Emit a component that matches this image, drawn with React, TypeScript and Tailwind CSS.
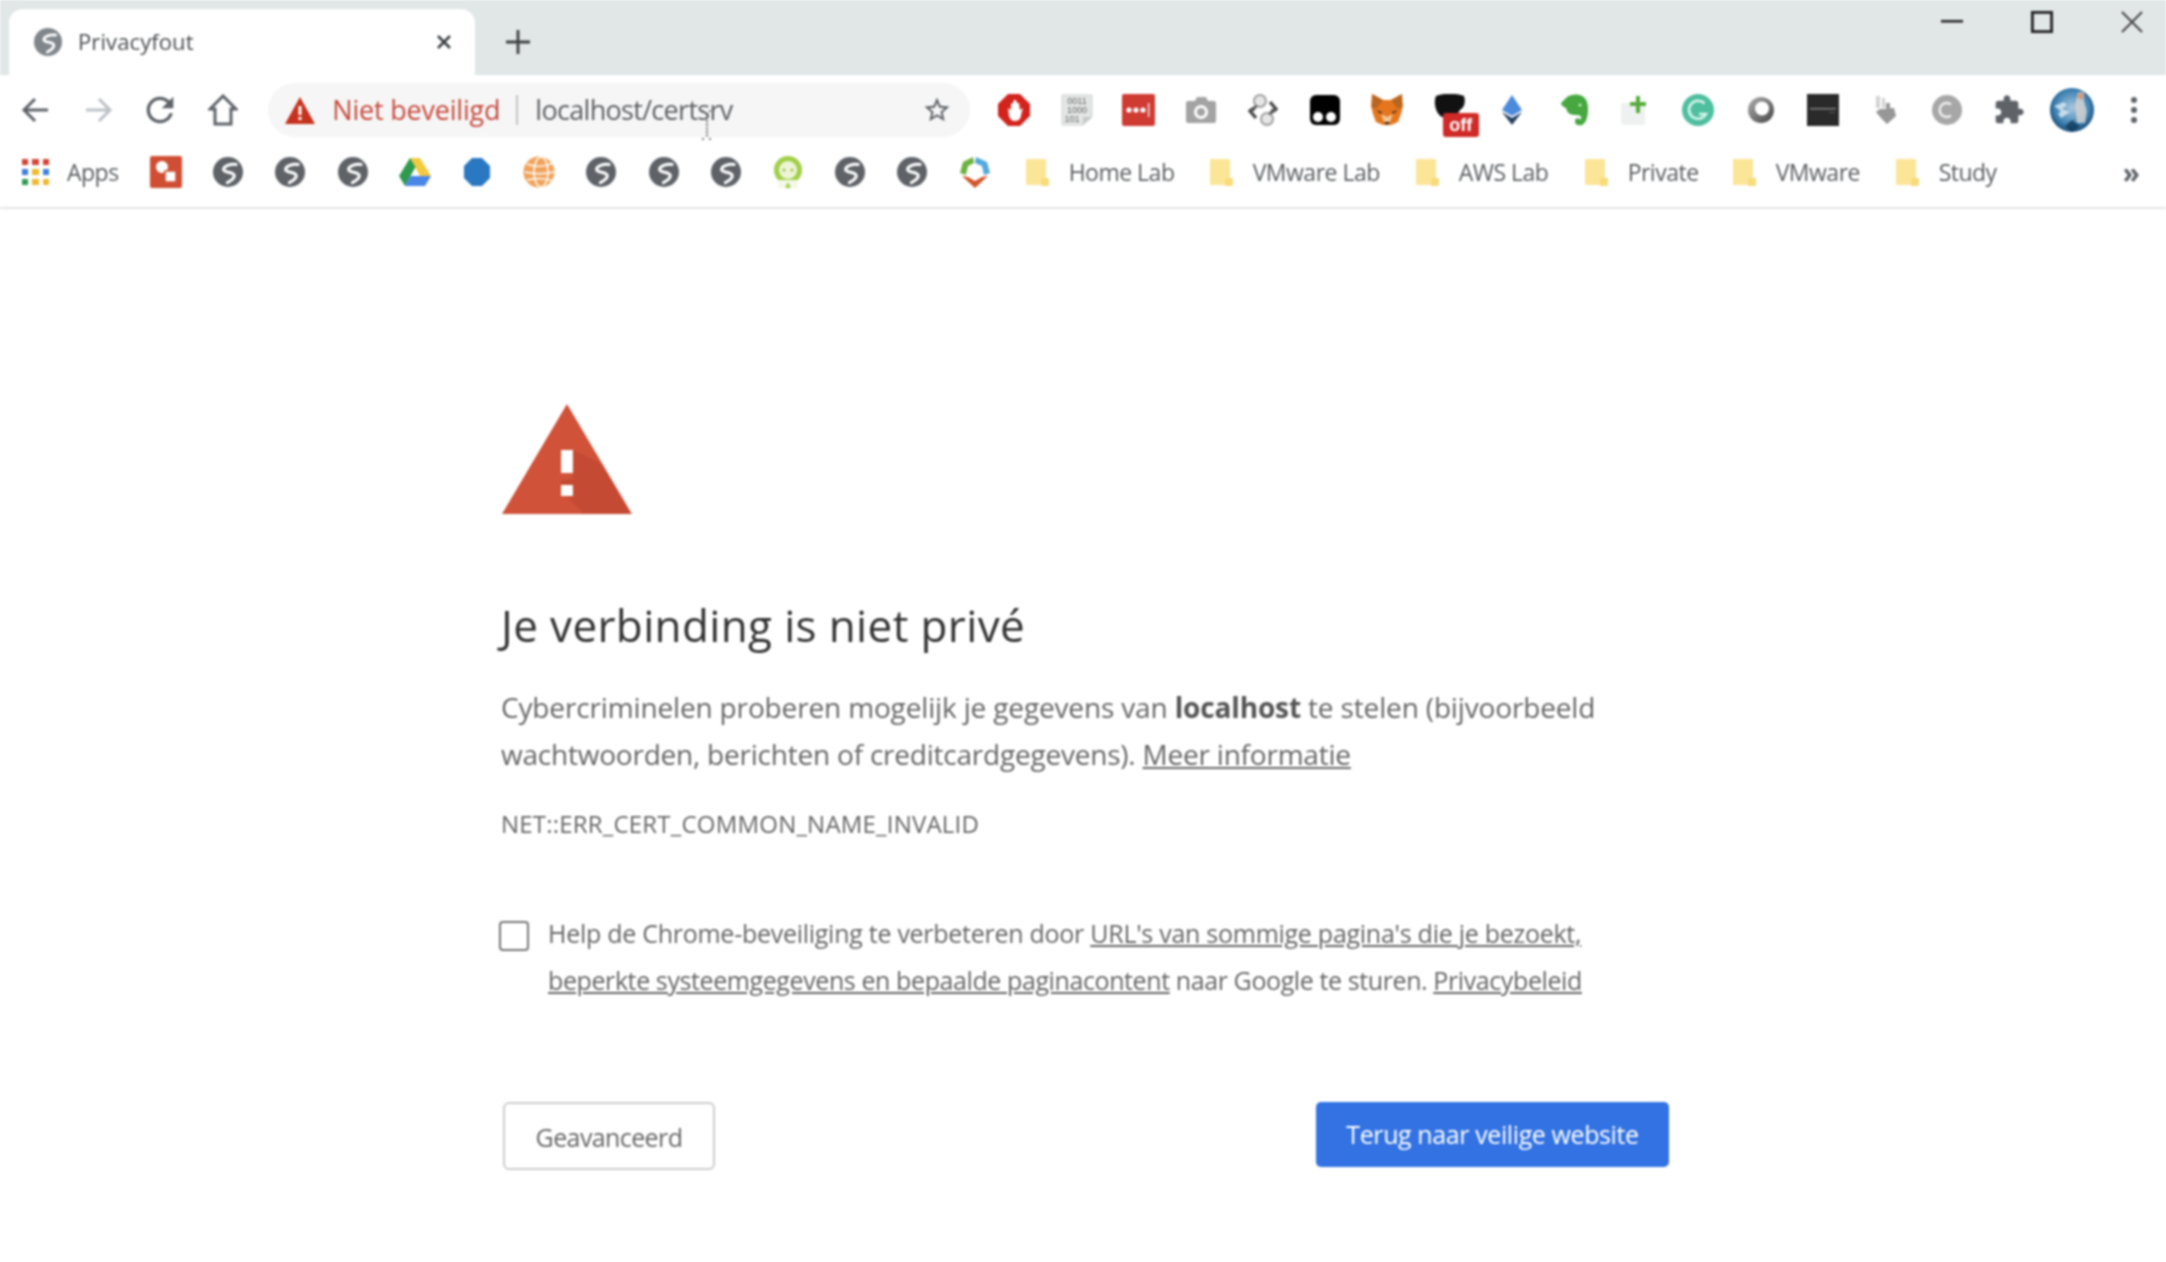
import React from "react";

const Globe = ({ c = "#5f6368", s = 30 }: { c?: string; s?: number }) => (
  <svg width={s} height={s} viewBox="0 0 24 24">
    <circle cx="12" cy="12" r="12" fill={c} />
    <path d="M18.5 6C14 5.5 8.5 7 8.5 10c0 3 8.5 1.2 8.5 5 0 2.8-3 4-5.5 5.5" fill="none" stroke="#fff" strokeWidth="2.4" strokeLinecap="round" />
  </svg>
);

const Slot = ({ children, className = "" }: { children?: React.ReactNode; className?: string }) => (
  <div className={"relative flex h-full w-[62.2px] shrink-0 items-center justify-center " + className}>{children}</div>
);

const Folder = () => (
  <svg width="24" height="28" viewBox="0 0 24 28" className="shrink-0">
    <path d="M1 1h19a1 1 0 0 1 1 1v25H1z" fill="#fbe597" />
    <path d="M16 20h8v7a1 1 0 0 1-1 1h-7z" fill="#f8dc7c" />
  </svg>
);

const extIcons: React.ReactNode[] = [
  <svg key="ub" width="32" height="32" viewBox="0 0 32 32">
    <path d="M10 0h12l10 10v12L22 32H10L0 22V10z" fill="#d3231d" />
    <path d="M10 14l1 8c1 4 4 5 6 5 4 0 6-3 6-6l2-7-3 2-1-7h-2l-1-3-2 0-1 3-2 1v6z" fill="#fff" />
  </svg>,
  <svg key="bin" width="32" height="32" viewBox="0 0 32 32">
    <path d="M1 1h30v22l-9 8H1z" fill="#e4e6e6" stroke="#d0d2d2" />
    <path d="M22 31v-8h9z" fill="#c8caca" />
    <text x="16" y="10" textAnchor="middle" fontSize="9" fontFamily="Liberation Sans" fill="#666">0011</text>
    <text x="16" y="19" textAnchor="middle" fontSize="9" fontFamily="Liberation Sans" fill="#666">1000</text>
    <text x="11" y="28" textAnchor="middle" fontSize="9" fontFamily="Liberation Sans" fill="#666">101</text>
  </svg>,
  <svg key="lp" width="33" height="32" viewBox="0 0 33 32">
    <rect width="33" height="32" rx="2" fill="#cf3a33" />
    <circle cx="7" cy="16" r="2.6" fill="#fff" />
    <circle cx="14" cy="16" r="2.6" fill="#fff" />
    <circle cx="21" cy="16" r="2.6" fill="#fff" />
    <rect x="26" y="9" width="1.3" height="14" fill="#fff" />
  </svg>,
  <svg key="cam" width="30" height="26" viewBox="0 0 30 26">
    <path d="M2 4h7l2-4h9l2 4h6a2 2 0 0 1 2 2v18a2 2 0 0 1-2 2H2a2 2 0 0 1-2-2V6a2 2 0 0 1 2-2z" fill="#a3a3a3" />
    <circle cx="15" cy="15" r="7" fill="#fff" />
    <circle cx="15" cy="15" r="4" fill="#a3a3a3" />
  </svg>,
  <svg key="coin" width="30" height="32" viewBox="0 0 30 32">
    <circle cx="12" cy="7" r="6" fill="#e6e6e6" stroke="#a0a0a0" strokeWidth="2" />
    <circle cx="19" cy="25" r="6" fill="#e6e6e6" stroke="#a0a0a0" strokeWidth="2" />
    <path d="M22 8l6 7-5 3M8 24l-6-7 5-3" fill="none" stroke="#4a4a4a" strokeWidth="3.4" />
    <path d="M2 16l7-4M28 16l-7 4" stroke="#555" strokeWidth="2.4" />
  </svg>,
  <svg key="tm" width="30" height="30" viewBox="0 0 30 30">
    <rect width="30" height="30" rx="6" fill="#000" />
    <circle cx="8" cy="22" r="5" fill="#fff" />
    <circle cx="21" cy="22" r="5" fill="#fff" />
  </svg>,
  <svg key="fox" width="32" height="32" viewBox="0 0 32 32">
    <path d="M1 0l11 6h8l11-6 1 12-2 8-3 8-7 3h-8l-7-3-3-8-2-8z" fill="#e5761e" />
    <path d="M1 0l11 6-6 8H1zM31 0L20 6l6 8h5z" fill="#b9651f" />
    <path d="M10 20l6 3 6-3-3 8h-6z" fill="#f4c595" />
    <path d="M5 16l6 2-1 2zM27 16l-6 2 1 2z" fill="#3a2a1c" />
    <path d="M13 28h6l-3 3z" fill="#28201a" />
  </svg>,
  <div key="off" className="relative h-[32px] w-[32px]">
    <svg width="32" height="24" viewBox="0 0 32 24" className="absolute top-0 left-0">
      <path d="M2 2c8-3 20-3 28 0 2 6 0 12-4 14-3 6-8 8-18 7C2 20-1 9 2 2z" fill="#111" />
    </svg>
    <div className="absolute top-[19px] left-[9px] flex h-[24px] w-[36px] items-center justify-center rounded-[3px] bg-[#cf2a27] font-['Liberation_Sans',sans-serif] text-[18px] leading-none font-bold text-white">off</div>
  </div>,
  <svg key="eth" width="20" height="30" viewBox="0 0 20 30">
    <path d="M10 0L0 15l10 6 10-6z" fill="#4c8bdc" />
    <path d="M0 17l10 13 10-13-10 6z" fill="#24405f" />
  </svg>,
  <svg key="en" width="28" height="32" viewBox="0 0 28 32">
    <path d="M1 9l6-6c3-2 9-3 12-2 6 1 9 6 9 14 0 8-2 14-6 16-4 1-7 0-7-4s5-3 5-1c3-4 0-5-5-5-6 0-8-3-9-7-3-1-5-3-5-5z" fill="#46a83f" />
    <circle cx="20" cy="11" r="1.5" fill="#cde8c9" />
  </svg>,
  <svg key="plus" width="30" height="30" viewBox="0 0 30 30">
    <path d="M0 8h24v22H4a4 4 0 0 1-4-4z" fill="#eef1ef" />
    <path d="M15 1h4v6h6v4h-6v7h-4v-7H9V7h6z" fill="#57ab3d" />
  </svg>,
  <svg key="g" width="32" height="32" viewBox="0 0 32 32">
    <circle cx="16" cy="16" r="16" fill="#4fbf9f" />
    <path d="M22.5 9.5A9 9 0 1 0 24 20h-7" fill="none" stroke="#d8f6ec" strokeWidth="2.6" />
  </svg>,
  <svg key="ring" width="26" height="26" viewBox="0 0 26 26">
    <defs>
      <linearGradient id="r" x1="0" y1="0" x2="1" y2="1">
        <stop offset="0" stopColor="#b0b0b0" />
        <stop offset="1" stopColor="#444" />
      </linearGradient>
    </defs>
    <circle cx="13" cy="13" r="13" fill="url(#r)" />
    <circle cx="14" cy="11.5" r="7" fill="#fff" />
  </svg>,
  <svg key="dk" width="32" height="32" viewBox="0 0 32 32">
    <rect width="32" height="32" fill="#2a2a2a" />
    <rect x="3" y="14" width="26" height="1.4" fill="#8a8a8a" />
    <rect x="22" y="18" width="6" height="0.8" fill="#666" />
  </svg>,
  <svg key="hand" width="24" height="30" viewBox="0 0 24 30">
    <path d="M3 1h4v12H3zM9 3h3v10H9z" fill="#d2d2d2" />
    <path d="M13 8h4v8h-4zM18 13h3l2 8-9 8-6-6-5-6 4-3h8z" fill="#979797" />
  </svg>,
  <svg key="c" width="30" height="30" viewBox="0 0 30 30">
    <circle cx="15" cy="15" r="15" fill="#a7a7a7" />
    <path d="M19 9.5a7 7 0 1 0 0 11" fill="none" stroke="#f2f2f2" strokeWidth="2.4" />
  </svg>,
  <svg key="ext" width="32" height="32" viewBox="0 0 24 24">
    <path fill="#5f6368" d="M20.5 11H19V7c0-1.1-.9-2-2-2h-4V3.5C13 2.12 11.88 1 10.5 1S8 2.12 8 3.5V5H4c-1.1 0-1.99.9-1.99 2v3.8H3.5c1.49 0 2.7 1.21 2.7 2.7s-1.21 2.7-2.7 2.7H2V20c0 1.1.9 2 2 2h3.8v-1.5c0-1.49 1.21-2.7 2.7-2.7 1.49 0 2.7 1.21 2.7 2.7V22H17c1.1 0 2-.9 2-2v-4h1.5c1.38 0 2.5-1.12 2.5-2.5S21.88 11 20.5 11z" />
  </svg>,
  <svg key="av" width="44" height="44" viewBox="0 0 44 44">
    <defs>
      <radialGradient id="av" cx="0.5" cy="0.45" r="0.6">
        <stop offset="0" stopColor="#a9c8de" />
        <stop offset="0.65" stopColor="#3f83b4" />
        <stop offset="1" stopColor="#0f3a62" />
      </radialGradient>
    </defs>
    <circle cx="22" cy="22" r="22" fill="url(#av)" />
    <path d="M4 18l10-4 3 3-5 4 8 3-9 6-3-4 3-3z" fill="#e6f0f6" opacity="0.75" />
    <path d="M28 4h6v9l3 10-2 12h-8l-2-18z" fill="#d9d5d2" opacity="0.8" />
    <circle cx="31" cy="8" r="3.5" fill="#c99f88" />
    <path d="M22 32l8 6-8 6-7-6z" fill="#0f3553" opacity="0.75" />
  </svg>,
  <svg key="dots" width="8" height="28" viewBox="0 0 8 28">
    <circle cx="4" cy="4" r="3" fill="#5f6368" />
    <circle cx="4" cy="14" r="3" fill="#5f6368" />
    <circle cx="4" cy="24" r="3" fill="#5f6368" />
  </svg>,
];

const bookmarkIcons: React.ReactNode[] = [
  <svg key="a" width="32" height="32" viewBox="0 0 32 32">
    <rect width="32" height="32" rx="2" fill="#d04f34" />
    <circle cx="12" cy="11" r="6" fill="#fff" />
    <rect x="15" y="15" width="11" height="11" fill="#fff" stroke="#d04f34" strokeWidth="1.5" />
  </svg>,
  <Globe key="b" />,
  <Globe key="c" />,
  <Globe key="d" />,
  <svg key="e" width="32" height="28" viewBox="0 0 32 28">
    <path d="M11 0h10l11 18H21z" fill="#f5c93f" />
    <path d="M11 0l5.5 9L6 28 0 18z" fill="#2d9a4d" />
    <path d="M6 28l5.5-10H32l-6 10z" fill="#4a86e8" />
  </svg>,
  <svg key="f" width="26" height="28" viewBox="0 0 26 28">
    <path d="M8 0h10l8 8v12l-8 8H8l-8-8V8z" fill="#2b78c2" />
  </svg>,
  <svg key="g" width="32" height="32" viewBox="0 0 32 32">
    <circle cx="16" cy="16" r="15.5" fill="#f0a35c" />
    <g fill="none" stroke="#fff" strokeWidth="1.4">
      <ellipse cx="18" cy="16" rx="7" ry="15" />
      <path d="M4 8c8 3 18 3 26-1M2 16c8 2 20 2 29 0M4 24c8-2 18-2 26 1" />
    </g>
  </svg>,
  <Globe key="h" />,
  <Globe key="i" />,
  <Globe key="j" />,
  <svg key="k" width="32" height="32" viewBox="0 0 32 32">
    <circle cx="16" cy="14" r="14" fill="#a3cf4a" />
    <circle cx="16" cy="14" r="9" fill="#edf5d6" />
    <circle cx="12" cy="14" r="1.5" fill="#9bbf4c" />
    <circle cx="20" cy="14" r="1.5" fill="#9bbf4c" />
    <path d="M6 24h20v8H6z" fill="#f4f8e8" />
    <path d="M16 26l-3 6h6z" fill="#a3cf4a" />
  </svg>,
  <Globe key="l" />,
  <Globe key="m" />,
  <svg key="n" width="30" height="32" viewBox="0 0 30 32">
    <path d="M13 1L3 6 0 17l6 2 2-9 6-3z" fill="#6cb23f" />
    <path d="M16 1l11 5 3 11-6 2-2-9-7-3z" fill="#53a8dd" />
    <path d="M2 20l6 1 7 4 7-4 6-1-13 12z" fill="#d2552a" />
  </svg>,
];

const folders = [
  { name: "Home Lab", w: "w-[184px]" },
  { name: "VMware Lab", w: "w-[206px]" },
  { name: "AWS Lab", w: "w-[169px]" },
  { name: "Private", w: "w-[148px]" },
  { name: "VMware", w: "w-[163px]" },
  { name: "Study", w: "w-[120px]" },
];

export default function App() {
  return (
    <div className="flex h-[1262px] w-full flex-col overflow-hidden bg-white font-['Open_Sans','Noto_Sans',sans-serif] blur-[0.8px]">
      {/* tab strip */}
      <div className="flex h-[75px] shrink-0 bg-[#e1e6e6]">
        <div className="mt-[9px] ml-[9px] flex h-[66px] w-[466px] items-center rounded-t-[14px] bg-white pb-[1px]">
          <div className="ml-[25px] flex w-[44px] shrink-0">
            <Globe c="#80868b" s={28} />
          </div>
          <span className="text-[22px] tracking-[0.1px] text-[#4a4d50]">Privacyfout</span>
          <svg width="18" height="18" viewBox="0 0 18 18" className="mr-[22px] ml-auto">
            <path d="M3 3l12 12M15 3L3 15" stroke="#3c4043" strokeWidth="2.6" />
          </svg>
        </div>
        <div className="mt-[9px] ml-[30px] flex h-[66px] items-center">
          <svg width="26" height="26" viewBox="0 0 26 26">
            <path d="M13 1v24M1 13h24" stroke="#3c4043" strokeWidth="2.8" />
          </svg>
        </div>
        <div className="ml-auto flex h-[44px] items-center gap-[68px] pr-[23px]">
          <svg width="22" height="4" viewBox="0 0 22 4">
            <rect width="22" height="2.5" fill="#222" />
          </svg>
          <svg width="22" height="22" viewBox="0 0 22 22">
            <rect x="1.4" y="1.4" width="19.2" height="19.2" fill="none" stroke="#222" strokeWidth="2.8" />
          </svg>
          <svg width="22" height="22" viewBox="0 0 22 22">
            <path d="M1 1l20 20M21 1L1 21" stroke="#444" strokeWidth="1.9" />
          </svg>
        </div>
      </div>

      {/* toolbar */}
      <div className="flex h-[70px] shrink-0 items-center pl-[5px]">
        <Slot>
          <svg width="30" height="30" viewBox="0 0 30 30">
            <path d="M27 15H4M14 4L3 15l11 11" fill="none" stroke="#5f6368" strokeWidth="3" />
          </svg>
        </Slot>
        <Slot>
          <svg width="30" height="30" viewBox="0 0 30 30">
            <path d="M3 15h23M16 4l11 11-11 11" fill="none" stroke="#bdc1c6" strokeWidth="3" />
          </svg>
        </Slot>
        <Slot>
          <svg width="40" height="40" viewBox="0 0 24 24">
            <path fill="#5f6368" d="M17.65 6.35A7.958 7.958 0 0 0 12 4c-4.42 0-7.99 3.58-7.99 8s3.57 8 7.99 8c3.73 0 6.84-2.55 7.73-6h-2.08A5.99 5.99 0 0 1 12 18c-3.31 0-6-2.69-6-6s2.69-6 6-6c1.66 0 3.14.69 4.22 1.78L13 11h7V4l-2.35 2.35z" />
          </svg>
        </Slot>
        <Slot>
          <svg width="30" height="32" viewBox="0 0 30 32">
            <path d="M15 2L2 15h5v15h16V15h5z" fill="none" stroke="#5f6368" strokeWidth="3" strokeLinejoin="miter" />
          </svg>
        </Slot>
        <div className="relative ml-[14.5px] flex h-[54px] w-[702px] shrink-0 items-center rounded-[27px] bg-[#f6f6f6]">
          <svg width="30" height="27" viewBox="0 0 30 27" className="ml-[17px] shrink-0">
            <path d="M15 0l15 27H0z" fill="#c5321f" />
            <rect x="13.5" y="9" width="3" height="9" fill="#fff" />
            <rect x="13.5" y="20" width="3" height="3" fill="#fff" />
          </svg>
          <span className="ml-[17px] text-[27px] tracking-[-0.2px] whitespace-nowrap text-[#c5493c]">Niet beveiligd</span>
          <div className="ml-[16px] h-[30px] w-[2px] shrink-0 bg-[#c4c4c4]"></div>
          <span className="ml-[17px] text-[27px] tracking-[-0.7px] text-[#5b5e61]">localhost/certsrv</span>
          <svg width="32" height="30" viewBox="0 0 24 24" className="mr-[17px] ml-auto shrink-0">
            <path fill="#5f6368" d="M22 9.24l-7.19-.62L12 2 9.19 8.63 2 9.24l5.46 4.73L5.82 21 12 17.27 18.18 21l-1.63-7.03L22 9.24zM12 15.4l-3.76 2.27 1-4.28-3.32-2.88 4.38-.38L12 6.1l1.71 4.04 4.38.38-3.32 2.88 1 4.28L12 15.4z" />
          </svg>
          {/* I-beam mouse pointer over the address text */}
          <svg width="12" height="30" viewBox="0 0 12 30" className="absolute top-[27px] left-[433px]">
            <path d="M6 3v24M1 1h3M8 1h3M1 29h3M8 29h3" fill="none" stroke="#555" strokeWidth="1.6" strokeDasharray="2 1.6" />
          </svg>
        </div>
        <div className="ml-[13px] flex h-full">
          {extIcons.map((ic, i) => (
            <Slot key={i}>{ic}</Slot>
          ))}
        </div>
      </div>

      {/* bookmarks bar */}
      <div className="shrink-0 border-b-2 border-[#e6e6e6] pb-[8px]">
        <div className="flex h-[54px] items-center pl-[22px] text-[#5a5d60]">
          <div className="grid h-[26px] w-[27px] shrink-0 grid-cols-3 grid-rows-3 gap-[4px]">
            {["bg-[#d5453a]", "bg-[#d5453a]", "bg-[#d5453a]", "bg-[#3f7fe0]", "bg-[#f0b92e]", "bg-[#3f7fe0]", "bg-[#2f9e54]", "bg-[#f0b92e]", "bg-[#f0b92e]"].map((c, i) => (
              <span key={i} className={c}></span>
            ))}
          </div>
          <span className="ml-[18px] w-[68px] shrink-0 text-[23px] tracking-[-0.5px]">Apps</span>
          {bookmarkIcons.map((ic, i) => (
            <Slot key={i}>{ic}</Slot>
          ))}
          <div className="ml-[19px] flex">
            {folders.map((f) => (
              <div key={f.name} className={"flex shrink-0 items-center " + f.w}>
                <Folder />
                <span className="ml-[20px] text-[23px] tracking-[-0.5px] whitespace-nowrap">{f.name}</span>
              </div>
            ))}
          </div>
          <span className="ml-[108px] text-[28px] leading-none font-bold text-[#5f6368]">»</span>
        </div>
      </div>

      {/* interstitial */}
      <main className="pt-[195px] pl-[501px]">
        <div className="w-[1168px]">
          <svg width="130" height="110" viewBox="0 0 132 110" preserveAspectRatio="none" className="ml-[1px] block">
            <path d="M66 0l66 110H0z" fill="#cf5239" />
            <path d="M72 46v29l-12 1v11l12 11 11 12h47L101 60z" fill="#c44a33" />
            <rect x="60" y="46" width="12" height="23" fill="#fff" />
            <rect x="60" y="81" width="12" height="11" fill="#fff" />
          </svg>
          <h1 className="mt-[83px] text-[44px] leading-[56px] font-normal tracking-[0.37px] text-[#333]">Je verbinding is niet privé</h1>
          <p className="mt-[31px] text-[28px] leading-[47px] tracking-[-0.15px] text-[#666]">
            Cybercriminelen proberen mogelijk je gegevens van <b className="font-bold text-[#555]">localhost</b> te stelen (bijvoorbeeld
            <br />
            <span className="tracking-[-0.22px]">
              wachtwoorden, berichten of creditcardgegevens). <span className="underline">Meer informatie</span>
            </span>
          </p>
          <p className="mt-[29px] text-[24px] leading-[34px] tracking-[0.2px] text-[#666]">NET::ERR_CERT_COMMON_NAME_INVALID</p>
          <div className="mt-[69px] flex">
            <div className="mt-[11px] -ml-[2px] h-[30px] w-[30px] shrink-0 rounded-[4px] border-2 border-[#767676]"></div>
            <p className="ml-[19px] text-[25px] leading-[47px] tracking-[-0.27px] whitespace-nowrap text-[#666]">
              Help de Chrome-beveiliging te verbeteren door <span className="underline">URL's van sommige pagina's die je bezoekt,</span>
              <br />
              <span className="tracking-[-0.4px]">
                <span className="underline">beperkte systeemgegevens en bepaalde paginacontent</span> naar Google te sturen. <span className="underline">Privacybeleid</span>
              </span>
            </p>
          </div>
          <div className="mt-[98px] flex items-start justify-between">
            <button className="ml-[2px] h-[68px] w-[212px] rounded-[6px] border-2 border-[#cdcdcd] bg-white pt-[3px] text-[25px] tracking-[-0.6px] text-[#666]">Geavanceerd</button>
            <button className="h-[65px] w-[353px] rounded-[5px] bg-[#3272e2] pt-[1px] text-[25px] tracking-[-0.4px] text-white">Terug naar veilige website</button>
          </div>
        </div>
      </main>
    </div>
  );
}
